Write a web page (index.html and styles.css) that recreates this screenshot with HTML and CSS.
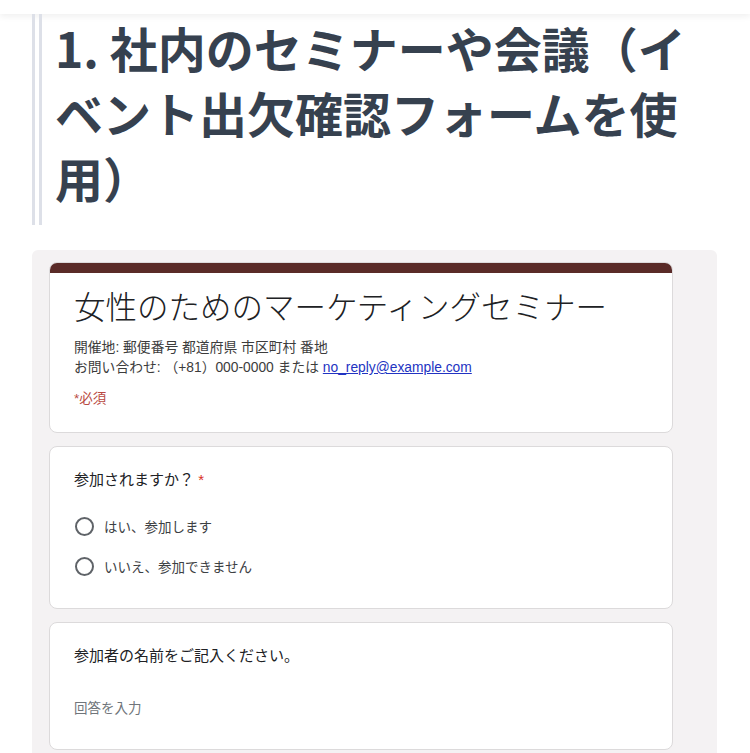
FILE: index.html
```html
<!DOCTYPE html>
<html lang="ja">
<head>
  <meta charset="UTF-8" />
  <title>イベント出欠確認フォーム</title>
  <link rel="stylesheet" href="styles.css">
</head>
<body>

  <div class="topbar"></div>

  <blockquote class="step">
    <h2>1. 社内のセミナーや会議（イベント出欠確認フォームを使用）</h2>
  </blockquote>

  <div class="form-shot">
    <div class="card header-card">
      <div class="accent"></div>
      <div class="card-body">
        <h1 class="form-title">女性のためのマーケティングセミナー</h1>
        <p class="form-desc">
          開催地: 郵便番号 都道府県 市区町村 番地<br>
          お問い合わせ: （+81）000-0000 または <a href="#">no_reply@example.com</a>
        </p>
        <p class="required-note">*必須</p>
      </div>
    </div>

    <div class="card">
      <div class="card-body">
        <div class="question">参加されますか？ <span class="star">*</span></div>
        <label class="option"><span class="radio"></span>はい、参加します</label>
        <label class="option"><span class="radio"></span>いいえ、参加できません</label>
      </div>
    </div>

    <div class="card">
      <div class="card-body">
        <div class="question">参加者の名前をご記入ください。</div>
        <div class="answer">回答を入力</div>
      </div>
    </div>
  </div>

</body>
</html>
```

FILE: styles.css
```css
body {
  margin: 0;
  background: #fff;
  font-family: "Noto Sans CJK JP", "Noto Sans", sans-serif;
  overflow: hidden;
}

.topbar {
  height: 14px;
  background: #fff;
  box-shadow: 0 2px 7px rgba(0, 0, 0, 0.07);
}

.step {
  margin: 0 40px 0 32px;
  padding: 1px 0 15px 13px;
  border-left: 10px double #dde0e8;
}

.step h2 {
  margin: 0;
  font-size: 48px;
  line-height: 65px;
  font-weight: 700;
  color: #36414f;
}

.form-shot {
  margin: 25px 33px 0 32px;
  padding: 12px 44px 20px 17px;
  background: #f4f2f3;
  border-radius: 6px;
  display: flex;
  flex-direction: column;
  gap: 13px;
}

.card {
  background: #fff;
  border: 1px solid #dcdadb;
  border-radius: 8px;
  overflow: hidden;
}

.accent {
  height: 10px;
  background: #5a2b28;
}

.card-body {
  padding: 0 24px;
  font-family: "Liberation Sans", "Noto Sans CJK JP", sans-serif;
  color: #202124;
}

.header-card .card-body {
  padding-top: 12px;
  padding-bottom: 23px;
}

.form-title {
  margin: 0;
  font-family: "Noto Sans CJK JP", sans-serif;
  font-size: 31.5px;
  line-height: 40px;
  font-weight: 300;
  color: #202124;
}

.form-desc {
  margin: 13px 0 0;
  font-size: 13.8px;
  line-height: 20px;
  color: #3c3c3c;
}

.form-desc a {
  color: #2233c2;
}

.required-note {
  margin: 11px 0 0;
  font-size: 13.5px;
  line-height: 20px;
  color: #b94a43;
}

.question {
  padding-top: 22px;
  font-size: 15px;
  line-height: 22px;
  color: #202124;
}

.star {
  color: #d93025;
}

.option {
  display: flex;
  align-items: center;
  gap: 10px;
  height: 40px;
  font-size: 13.5px;
  color: #3c4043;
}

.question + .option {
  margin-top: 15px;
}

.option:last-child {
  margin-bottom: 22px;
}

.radio {
  width: 15px;
  height: 15px;
  border: 2px solid #5f6368;
  border-radius: 50%;
  margin-left: 1px;
}

.answer {
  margin-top: 32px;
  padding-bottom: 30px;
  font-size: 13.5px;
  line-height: 20px;
  color: #70757a;
}
```
